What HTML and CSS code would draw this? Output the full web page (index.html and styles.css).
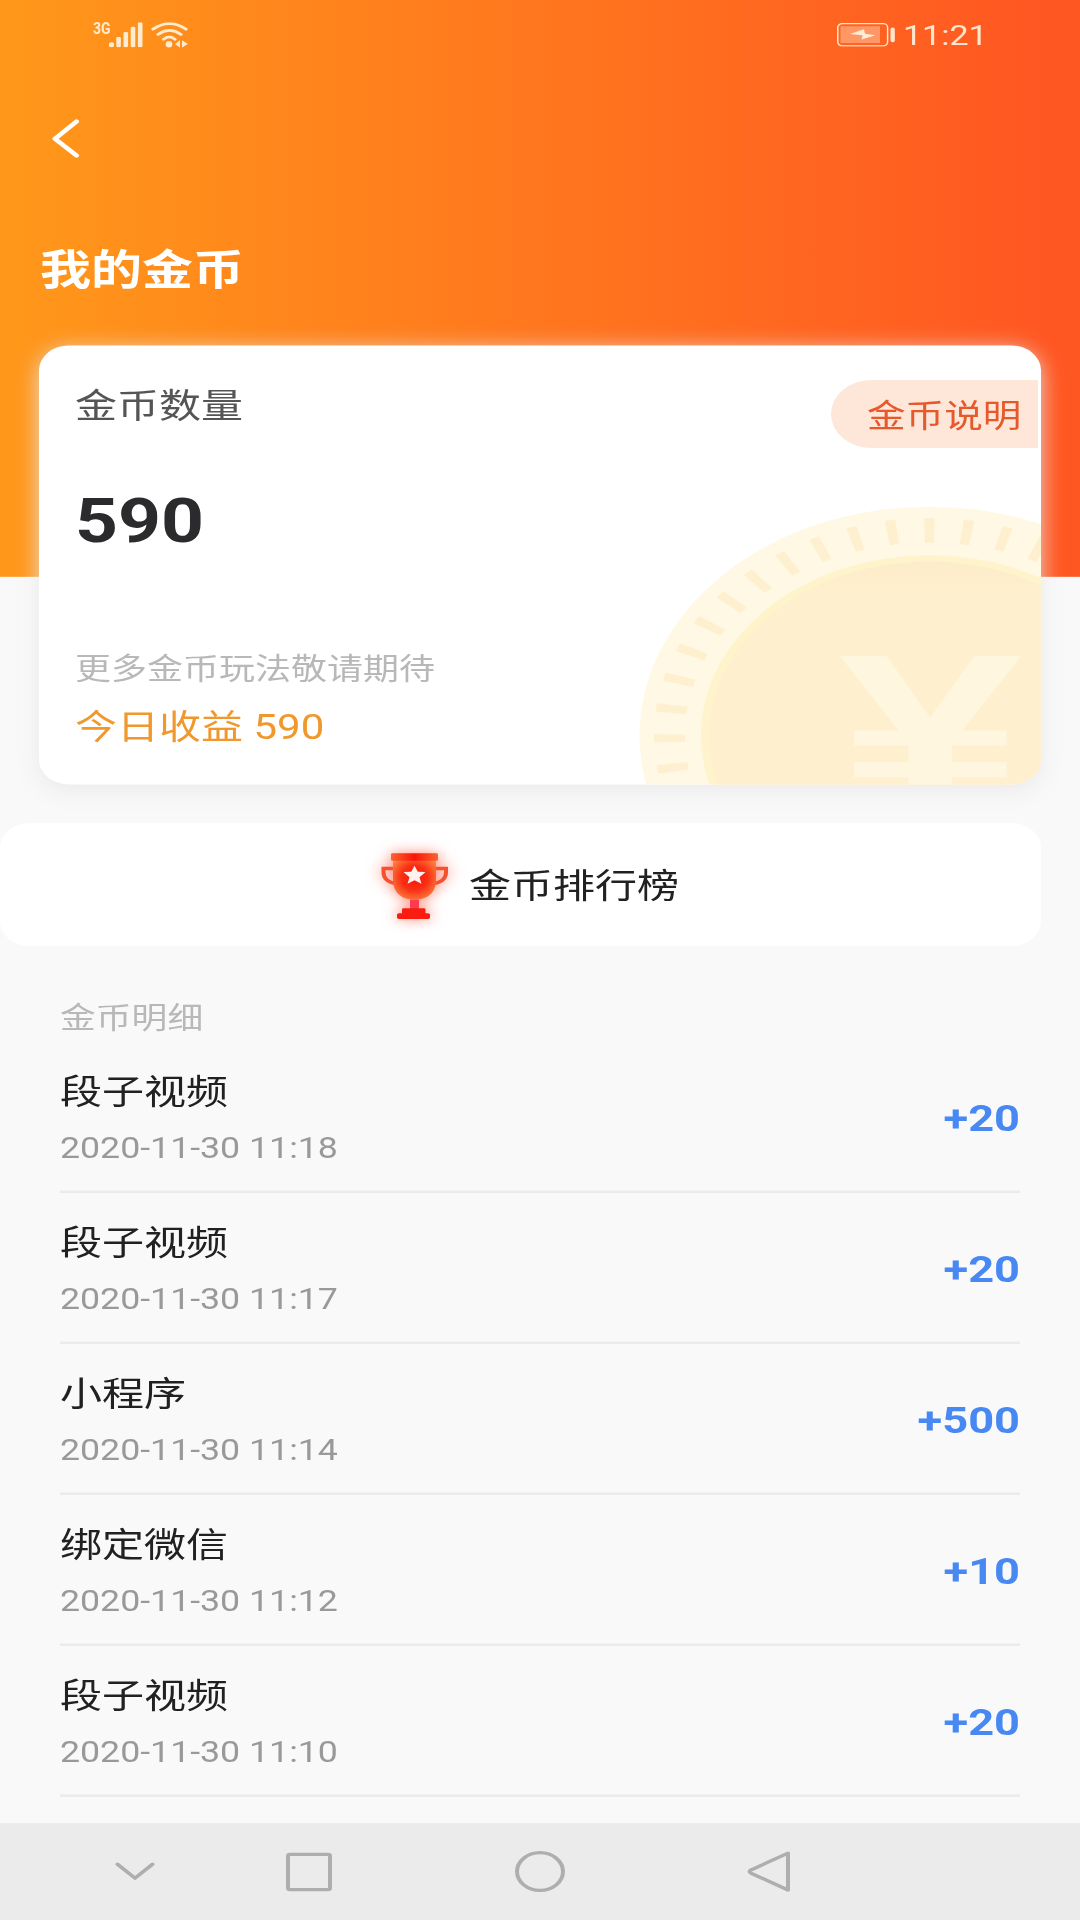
FILE: index.html
```html
<!DOCTYPE html>
<html lang="zh-CN">
<head>
<meta charset="utf-8">
<title>我的金币</title>
<link rel="stylesheet" href="styles.css">
</head>
<body>
<div class="screen">
  <header class="header">
    <div class="status">
      <div class="status-left">
        <span class="network">3G</span>
        <svg class="signal" width="34" height="31" viewBox="0 0 34 31" fill="currentColor"><rect x="0" y="24.500" width="5" height="6" rx="2"/><rect x="7.300" y="18" width="4.600" height="12.500" rx="1.500"/><rect x="14.500" y="12" width="4.600" height="18.500" rx="1.500"/><rect x="21.700" y="5.500" width="4.600" height="25" rx="1.500"/><rect x="28.900" y="0" width="4.600" height="30.500" rx="1.500"/></svg>
        <svg class="wifi" width="38" height="32" viewBox="0 0 38 32" fill="none" stroke="currentColor" stroke-width="3.200" stroke-linecap="round"><path d="M2 8.500Q18.500-5 35 8.500M7 15q11.500-10 23 0M12.500 21q6-6 11.500 0"/><g fill="currentColor" stroke="none"><ellipse cx="18" cy="27" rx="3.300" ry="4"/><path d="M29 22v9l-5-4.500zM31 22v9l6-4.500z"/></g></svg>
      </div>
      <div class="status-right">
        <svg width="58" height="29" viewBox="0 0 58 29" fill="none"><rect x=".8" y=".8" width="49.800" height="27" rx="4.500" stroke="currentColor" stroke-width="1.500"/><rect x="3.500" y="4" width="39.500" height="20.500" fill="currentColor" opacity=".4"/><path d="M13 13.500 25.500 15l-1 5L38.500 15 28 13l-1-5.500z" fill="currentColor"/><rect x="53.500" y="5.500" width="4.300" height="18" rx="2" fill="currentColor"/></svg>
        <span class="clock">11:21</span>
      </div>
    </div>
    <div class="toolbar">
      <svg width="28" height="48" viewBox="0 0 28 48" fill="none" stroke="#fff" stroke-width="5" stroke-linecap="round" stroke-linejoin="round"><path d="M24.500 3 3 24l21.500 20.500"/></svg>
    </div>
    <h1 class="title">我的金币</h1>
  </header>

  <section class="card">
    <svg class="coin" width="402" height="340" viewBox="0 0 402 340">
      <defs>
        <linearGradient id="face" x1="0" y1="0" x2="0" y2="1"><stop offset="0" stop-color="#fdecca"/><stop offset=".12" stop-color="#fef0ce"/><stop offset="1" stop-color="#fef0ce"/></linearGradient>
      </defs>
      <g transform="translate(290.500 280.500) scale(1 .962)">
        <circle r="290" fill="#fff8e5"/>
        <circle r="260" fill="none" stroke="#feefcf" stroke-width="31" pathLength="360" stroke-dasharray="2.200 6.050" stroke-dashoffset="-4.900"/>
        <circle r="228.500" fill="#fff3cb"/>
        <circle r="220.500" fill="url(#face)"/>
      </g>
      <text class="yen" transform="translate(291.500 361) scale(1 .78)" text-anchor="middle">¥</text>
    </svg>
    <a class="help">金币说明</a>
    <div class="card-label">金币数量</div>
    <div class="balance">590</div>
    <div class="hint">更多金币玩法敬请期待</div>
    <div class="today">今日收益 590</div>
  </section>

  <a class="ranking">
    <svg class="trophy" width="68" height="80" viewBox="0 0 68 80">
      <defs>
        <radialGradient id="cup" cx=".5" cy=".45" r=".62"><stop offset="0" stop-color="#fb1408"/><stop offset=".5" stop-color="#fa2f14"/><stop offset="1" stop-color="#fb8440"/></radialGradient>
        <linearGradient id="rim"><stop offset="0" stop-color="#fa6430"/><stop offset=".5" stop-color="#fb1408"/><stop offset="1" stop-color="#fa6430"/></linearGradient>
      </defs>
      <path d="M13 18.500H2.500V23q0 11 12.500 14M54 18.500h11V23q0 11-12.500 14" fill="none" stroke="#f6502c" stroke-width="4"/>
      <path d="M12 8h43v25c0 15-9 23.500-21.500 23.500S12 48 12 33z" fill="url(#cup)"/>
      <rect x="10" y="0" width="47" height="9" rx="1.500" fill="url(#rim)"/>
      <path d="M29 56.500h9V69h-9z" fill="#fc3c50"/>
      <rect x="21" y="67" width="23.500" height="8" rx="1.500" fill="#fb1c10"/>
      <rect x="16" y="73" width="33" height="7" rx="2" fill="#fb1c10"/>
      <path d="m33.500 15 3.300 7.300 7.700.6-6 6.300 2 8-7-4.500-7 4.500 2-8-6-6.300 7.700-.6z" fill="#fff1ee"/>
    </svg>
    <span class="ranking-label">金币排行榜</span>
  </a>

  <main class="details">
    <h2 class="details-title">金币明细</h2>
    <ul class="list">
      <li class="row"><div><div class="name">段子视频</div><div class="date">2020-11-30 11:18</div></div><b class="amount">+20</b></li>
      <li class="row"><div><div class="name">段子视频</div><div class="date">2020-11-30 11:17</div></div><b class="amount">+20</b></li>
      <li class="row"><div><div class="name">小程序</div><div class="date">2020-11-30 11:14</div></div><b class="amount">+500</b></li>
      <li class="row"><div><div class="name">绑定微信</div><div class="date">2020-11-30 11:12</div></div><b class="amount">+10</b></li>
      <li class="row"><div><div class="name">段子视频</div><div class="date">2020-11-30 11:10</div></div><b class="amount">+20</b></li>
    </ul>
  </main>

  <nav class="navbar">
    <svg width="40" height="54" viewBox="0 0 40 54"><path d="m2.500 18 17.500 17L37.500 18"/></svg>
    <svg width="46" height="54" viewBox="0 0 46 54"><rect x="2" y="6" width="42" height="43" rx="2"/></svg>
    <svg width="50" height="54" viewBox="0 0 50 54"><circle cx="25" cy="27" r="23"/></svg>
    <svg width="44" height="54" viewBox="0 0 44 54"><path d="M41 4.500v45L4 29q-3-2 0-4z"/></svg>
  </nav>
</div>
</body>
</html>
```
FILE: styles.css
```css
* { box-sizing: border-box; }

html { height: 1920px; overflow: hidden; }

body {
  margin: 0;
  height: 1920px;
  overflow: hidden;
  background: #f9f9f9;
}

/* The 1080x2340 phone screen is fitted to a 1920px tall viewport */
.screen {
  display: flex;
  flex-direction: column;
  width: 1080px;
  height: 2340px;
  margin-bottom: -420px;
  transform: scaleY(0.820513);
  transform-origin: 0 0;
  background: #f9f9f9;
  font-family: Roboto, "Noto Sans CJK SC", sans-serif;
  color: #212121;
}

svg { display: block; flex: none; }

.header {
  flex: none;
  height: 703px;
  background: linear-gradient(90deg, #ff981a 0%, #ff5722 97%);
  color: #fff;
}

.status {
  display: flex;
  justify-content: space-between;
  height: 84px;
  padding: 0 93px;
  color: rgba(255, 245, 225, 0.9);
}

.status-left { display: flex; padding-top: 27px; }
.network { width: 16px; font-size: 20px; font-weight: 700; line-height: 15px; transform: scaleX(0.7); transform-origin: 0 0; }
.wifi { margin-left: 8px; }
.status-right { display: flex; align-items: center; gap: 8px; }
.clock { width: 84px; padding-top: 2px; font-size: 34px; line-height: 42px; }

.toolbar { display: flex; align-items: center; height: 170px; padding-left: 52px; }

.title { margin: 46px 0 0 40px; font-size: 51px; line-height: 60px; font-weight: 700; }

.card {
  position: relative;
  flex: none;
  height: 535px;
  margin: -282px 39px 0;
  padding: 44px 36px 0;
  border-radius: 30px;
  background: #fff;
  box-shadow: 0 6px 25px rgba(232, 232, 232, 0.9);
}

.coin { position: absolute; right: 0; bottom: 0; border-radius: 0 0 30px 0; }
.yen { font: 700 330px "Liberation Sans", sans-serif; fill: #fff6e0; }

.help {
  position: absolute;
  top: 42px;
  right: 3px;
  width: 207px;
  height: 83px;
  padding-left: 36px;
  border-radius: 41px 0 0 41px;
  background: #fee6d9;
  color: #e5592b;
  font-size: 38.6px;
  line-height: 88px;
  white-space: nowrap;
}

.card-label { font-size: 42px; line-height: 60px; color: #555; }
.balance { margin-top: 64px; font-size: 75px; line-height: 90px; font-weight: 700; color: #2b2b2d; }
.hint { margin-top: 110px; font-size: 36px; line-height: 54px; color: #b8b8b8; }
.today { margin-top: 14px; font-size: 42px; line-height: 60px; color: #f0982e; }

.ranking {
  display: flex;
  flex: none;
  align-items: center;
  gap: 20px;
  width: 1041px;
  height: 150px;
  margin-top: 47px;
  padding: 3px 0 0 381px;
  border-radius: 30px;
  background: #fff;
  font-size: 42px;
  line-height: 60px;
}

.ranking-label { padding-top: 2px; }

.trophy { overflow: visible; filter: drop-shadow(0 0 8px rgba(255, 50, 20, 0.6)); }

.details { flex: 1; padding: 60px 60px 0; }
.details-title { margin: 0; font-size: 35.8px; line-height: 57px; font-weight: 400; color: #b8b8b8; }
.list { margin: 0; padding: 0; list-style: none; }

.row {
  display: flex;
  align-items: center;
  justify-content: space-between;
  height: 184px;
  border-bottom: 3px solid #ebebeb;
}

.name { margin-top: 7px; font-size: 42px; line-height: 66px; }
.date { margin-top: 4px; font-size: 35.7px; line-height: 60px; color: #999; }
.amount { padding-top: 4px; font-size: 45.2px; line-height: 54px; color: #4788f3; }

.navbar {
  display: flex;
  flex: none;
  align-items: center;
  height: 118px;
  padding-left: 115px;
  background: #ebebeb;
}

.navbar svg { fill: none; stroke: #aeaeae; stroke-width: 4; stroke-linecap: round; stroke-linejoin: round; }
.navbar svg:nth-child(2) { margin-left: 131px; }
.navbar svg:nth-child(3) { margin-left: 183px; }
.navbar svg:nth-child(4) { margin-left: 182px; }
```
